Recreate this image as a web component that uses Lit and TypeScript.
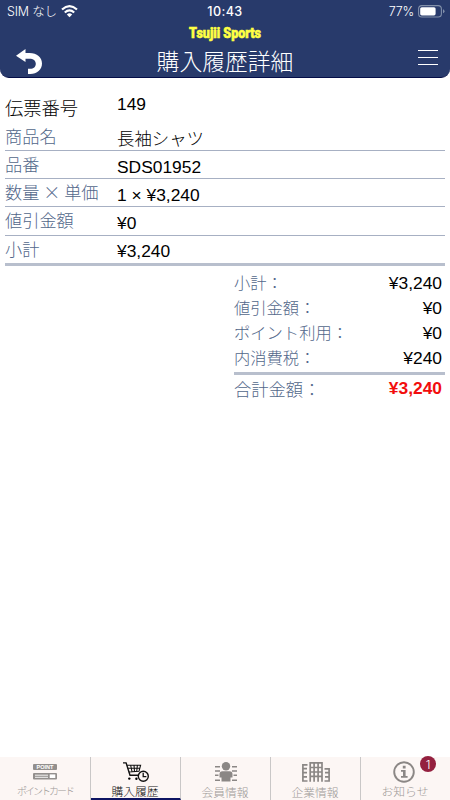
import { LitElement, html, css, svg } from "lit";
import { customElement, property } from "lit/decorators.js";

const rows = [
  ["伝票番号", "149", "head"],
  ["商品名", "長袖シャツ", "item"],
  ["品番", "SDS01952", "item"],
  ["数量 × 単価", "1 × ¥3,240", "item"],
  ["値引金額", "¥0", "item tall"],
  ["小計", "¥3,240", "item last"],
];

const totals = [
  ["小計：", "¥3,240"],
  ["値引金額：", "¥0"],
  ["ポイント利用：", "¥0"],
  ["内消費税：", "¥240"],
];

const icons: Record<string, unknown> = {
  card: svg`<rect x="0" y="0" width="24" height="6" rx="1" fill="#938f8d"/>
    <text x="12" y="5.1" text-anchor="middle" textLength="17" lengthAdjust="spacingAndGlyphs" font-family="Liberation Sans" font-weight="700" font-size="5.6" fill="#fff">POINT</text>
    <rect y="9" width="24" height="6.4" rx="1" fill="#938f8d"/>
    <path d="M2 11.2h13M2 13.3h13" stroke="#fff" stroke-width=".9"/><rect x="16.7" y="10.4" width="5.6" height="3.6" fill="#fff"/>`,
  cart: svg`<g fill="none" stroke="#111" stroke-width="1.1"><path stroke-width="1.4" d="M0 .9H3.1L7 13.2H15"/><path d="M3.8 3.2H17.6L16 9.3L5.8 10M4.6 6.3H16.8M7.6 3L9 9.6M11 3L11.5 9.5M14.4 3L13.7 9.5"/>
    <circle cx="20.3" cy="14.2" r="5" fill="#fcf6f4" stroke-width="1.4"/><path stroke-width="1.3" d="M20.2 10.8v3.9h3.2"/></g>
    <circle cx="6.3" cy="16.6" r="1.2"/><circle cx="13.4" cy="16.8" r="1.2"/>`,
  person: svg`<g fill="#8b8785"><circle cx="11" cy="4.3" r="4.2"/><path d="M7.5 9.2h7q3 0 3 3v3.2h-2v4h-9v-4h-2v-3.2q0-3 3-3z"/>
    <path d="M0 4.1h5v1.5H0zM17 4.1h5v1.5h-5zM0 8.3h5v1.5H0zM17 8.3h5v1.5h-5zM0 12.5h3.5V14H0zM18.5 12.5H22V14h-3.5zM0 17.5h5V19H0zM17 17.5h5V19h-5z"/></g>`,
  building: svg`<g fill="none" stroke="#8b8785" stroke-width="1.7"><path d="M5.5 2.8H.9V19H5.5M.8 6.7H5M.8 10.7H5M.8 14.8H5M22.5 6.8H27.1V19H22.5M27.2 10.7H23M27.2 14.8H23"/>
    <path d="M8.2 19.8V.9H20V19.8M8 5.5H20M8 10H20M8 14.4H20M12.1 1V14.4M16.1 1V14.4M12.1 14.4V19.8M16.1 14.4V19.8"/></g>`,
  info: svg`<circle cx="11" cy="11" r="9.8" fill="none" stroke="#8b8785" stroke-width="1.9"/><path d="M9.8 4.8h2.8v2.6H9.8zM8 9h4.6v6h2v1.7H8V15h2v-4.3H8z" fill="#8b8785"/>`,
};

const tabs = [
  { label: "ポイントカード", icon: "card", w: 24, h: 16, cls: "first" },
  { label: "購入履歴", icon: "cart", w: 26, h: 20, cls: "active" },
  { label: "会員情報", icon: "person", w: 22, h: 20, cls: "" },
  { label: "企業情報", icon: "building", w: 28, h: 20, cls: "" },
  { label: "お知らせ", icon: "info", w: 22, h: 22, cls: "news" },
];

@customElement("app-tab")
class AppTab extends LitElement {
  @property({ attribute: false }) tab = tabs[0];
  static styles = css`
    :host { display: block; min-width: 0; }
    .tab { box-sizing: border-box; position: relative; height: 43px; display: flex; flex-direction: column; align-items: center; color: #9d9997; border-right: 1px solid #c9c7c7; }
    .icon { height: 27px; padding-top: 5px; box-sizing: border-box; }
    .icon svg { display: block; }
    .label { font-size: 11.8px; line-height: 15px; white-space: nowrap; padding-right: 1px; }
    .first .icon { padding-top: 7px; }
    .first .label { font-size: 10px; letter-spacing: -2px; line-height: 13px; padding: 0; }
    .active { color: #111; border-bottom: 2px solid #0d1462; }
    .news { border-right: 0; }
    .news .icon { padding-top: 4px; padding-right: 3px; }
    .news .label { padding-right: 1px; line-height: 14px; }
    .badge { position: absolute; left: 59px; top: -1px; width: 16px; height: 16px; border-radius: 50%; background: #94203f; color: #fff; font: 300 12px/17px Inter, sans-serif; text-align: center; }
  `;
  render() {
    const t = this.tab;
    return html`<div class="tab ${t.cls}">
      <div class="icon"><svg width=${t.w} height=${t.h} viewBox="0 0 ${t.w} ${t.h}">${icons[t.icon]}</svg></div>
      <div class="label">${t.label}</div>
      ${t.cls === "news" ? html`<div class="badge">1</div>` : ""}
    </div>`;
  }
}

@customElement("app-root")
class AppRoot extends LitElement {
  static styles = css`
    :host { display: flex; flex-direction: column; height: 800px; background: #fff; overflow: hidden; font-family: "Noto Sans CJK JP", sans-serif; font-weight: 300; color: #000; }
    header { height: 78px; box-sizing: border-box; flex: none; background: #283a6b; color: #fff; border-radius: 0 0 9px 9px; border-bottom: 1px solid #040d47; }
    .status { height: 23px; display: grid; grid-template-columns: 1fr auto 1fr; align-items: center; font: 400 12.5px/23px Inter, "Noto Sans CJK JP", sans-serif; }
    .left, .right { display: flex; align-items: center; }
    .left { padding-left: 7px; gap: 4px; }
    .sim { font-weight: 300; letter-spacing: -.2px; }
    .time { font-weight: 500; font-size: 12.6px; letter-spacing: .4px; }
    .right { justify-content: flex-end; padding-right: 5px; gap: 4px; }
    .brand { height: 20px; line-height: 20px; display: flex; justify-content: center; }
    .brand svg { overflow: visible; }
    .nav { height: 34px; display: grid; grid-template-columns: 60px 1fr 60px; }
    .back { padding: 6px 0 0 16px; }
    .menu { padding: 7px 0 0 28px; }
    h1 { margin: 0; font-size: 22.8px; line-height: 35px; font-weight: 300; text-align: center; }
    svg { display: block; }
    main { flex: 1; padding: 14px 5px 0; }
    .row { box-sizing: border-box; display: grid; grid-template-columns: 112px 1fr; height: 28px; line-height: 20px; }
    .row.item { border-bottom: 1px solid #a7b0c3; }
    .row.head { height: 31px; }
    .row.tall { height: 29px; }
    .row.last { height: 30px; border-bottom: 3px solid #b8bfcd; }
    .name { padding-top: 3px; font-size: 17.2px; color: #52678a; white-space: pre; }
    .head .name { color: #000; font-size: 18.3px; padding: 5px 0 0; }
    .value { font: 400 17.4px/20px "Liberation Sans", "Noto Sans CJK JP", sans-serif; padding-top: 6px; }
    .head .value { padding-top: 2px; }
    .last .value { padding-top: 5px; }
    .cjk { font-weight: 300; }
    .totals { margin: 4px 0 0 229px; }
    .total { display: flex; justify-content: space-between; height: 25px; align-items: center; }
    .total .name { font-size: 16.3px; padding: 0 0 1px; }
    .total .value { padding: 0 3px 0 0; }
    .sum { height: 32px; box-sizing: border-box; margin-top: 2px; border-top: 3px solid #b8bfcd; }
    .sum .name { font-size: 17.3px; padding: 0 0 2px; }
    .sum .value { color: #f20d0d; font-weight: 700; padding-bottom: 3px; }
    nav { display: grid; grid-template-columns: 91px 90px 90px 90px 89px; height: 43px; background: #fcf6f4; flex: none; }
  `;
  render() {
    return html`
      <header>
        <div class="status">
          <div class="left"><span class="sim">SIM なし</span>
            <svg width="17" height="13" viewBox="0 0 17 13"><g fill="none" stroke="#fff" stroke-width="2.2"><path d="M1 4.5Q8.5-2.2 16 4.5M3.8 7.5Q8.5 3.3 13.2 7.5"/></g><path d="M5.8 9.4Q8.5 7.3 11.2 9.4L8.5 12.2z" fill="#fff"/></svg>
          </div>
          <span class="time">10:43</span>
          <div class="right"><span class="sim">77%</span>
            <svg width="27" height="13" viewBox="0 0 27 13"><rect x=".6" y=".6" width="22.8" height="11.4" rx="3.3" fill="none" stroke="#8290aa" stroke-width="1.1"/><rect x="2.2" y="2.2" width="15.4" height="8.2" rx="1.6" fill="#fff"/><path d="M25 4.3q1.5.4 1.5 2t-1.5 2z" fill="#8290aa"/></svg>
          </div>
        </div>
        <div class="brand"><svg width="96" height="20" viewBox="0 0 96 20"><text x="12" y="14.6" textLength="72" lengthAdjust="spacingAndGlyphs" fill="#ffff43" stroke="#ffff43" stroke-width=".6" font-family="Roboto" font-weight="900" font-size="14">Tsujii Sports</text></svg></div>
        <div class="nav">
          <div class="back"><svg width="27" height="27" viewBox="0 0 27 27"><path d="M9.5 0v4h4C21 4 26 8.3 26 14.6S21 25 14.3 25H12V19.8h2.2c3.4 0 5.6-2 5.6-5 0-3.2-2.6-5.1-6.3-5.1h-4v3.2L0 6.8z" fill="#fff"/></svg></div>
          <h1>購入履歴詳細</h1>
          <div class="menu"><svg width="20" height="15" viewBox="0 0 20 15"><path d="M0 .5h20M0 7.5h20M0 14.5h20" stroke="#fff"/></svg></div>
        </div>
      </header>
      <main>
        ${rows.map(([n, v, c]) => html`<div class="row ${c}"><div class="name">${n}</div><div class="value"><span class=${v.startsWith("長") ? "cjk" : ""}>${v}</span></div></div>`)}
        <div class="totals">
          ${totals.map(([n, v]) => html`<div class="total"><div class="name">${n}</div><div class="value">${v}</div></div>`)}
          <div class="total sum"><div class="name">合計金額：</div><div class="value">¥3,240</div></div>
        </div>
      </main>
      <nav>${tabs.map((t) => html`<app-tab .tab=${t}></app-tab>`)}</nav>`;
  }
}
